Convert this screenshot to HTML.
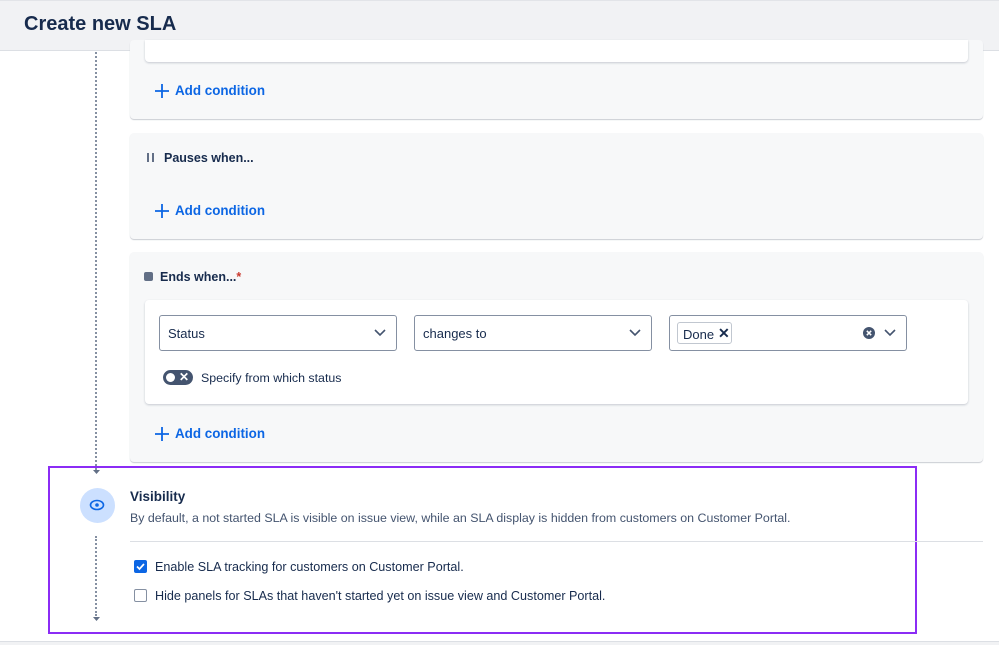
<!DOCTYPE html>
<html><head><style>
*{box-sizing:border-box;margin:0;padding:0}
body{width:999px;height:645px;overflow:hidden;background:#fff;font-family:"Liberation Sans",sans-serif;color:#172b4d;position:relative}
.abs{position:absolute}
.hdr{left:0;top:0;width:999px;height:51px;background:#f1f2f4;border-bottom:1px solid #dcdfe4;border-top:1px solid #e2e4e8}
.hdr h1{position:absolute;left:24px;top:12px;font-size:20px;font-weight:bold;color:#172b4d}
.panel{background:#f7f8f9;border-radius:4px;box-shadow:0 1px 1px #c9ccd2;left:130px;width:853px}
.card{background:#fff;border-radius:4px;box-shadow:0 1px 2px #c5c9d0;left:145px;width:823px}
.add{color:#0c66e4;font-size:13.4px;font-weight:bold}
.add svg{position:absolute;left:0;top:1px}
.add span{position:absolute;left:20px;top:0;white-space:nowrap}
.lbl{font-size:12.5px;font-weight:bold;color:#172b4d;white-space:nowrap}
.sel{border:1px solid #8590a2;border-radius:3px;height:36px;top:315px;width:238px;background:#fff;font-size:13px}
.sel .t{position:absolute;left:8px;top:10px}
.sel svg{position:absolute;right:10px;top:13px}
.dot{border-left:2px dotted #8590a2;width:0}
.txt{font-size:12.4px;color:#44546f;white-space:nowrap}
</style></head><body>
<div class="abs hdr"><h1>Create new SLA</h1></div>
<div class="abs dot" style="left:95px;top:52px;height:418px"></div>
<svg class="abs" style="left:92px;top:468px" width="9" height="8"><path d="M1 2 L4.5 6 L8 2" fill="#626f86"/></svg>

<div class="abs panel" style="top:40px;height:79px"></div>
<div class="abs card" style="top:40px;height:22px;border-top-left-radius:0;border-top-right-radius:0"></div>
<div class="abs add" style="left:155px;top:83px"><svg width="14" height="14"><path d="M7 0v14M0 7h14" stroke="#0c66e4" stroke-width="1.8"/></svg><span>Add condition</span></div>

<div class="abs panel" style="top:133px;height:106px"></div>
<div class="abs" style="left:147px;top:153px;width:2px;height:9px;background:#626f86"></div>
<div class="abs" style="left:152px;top:153px;width:2px;height:9px;background:#626f86"></div>
<div class="abs lbl" style="left:164px;top:151px">Pauses when...</div>
<div class="abs add" style="left:155px;top:203px"><svg width="14" height="14"><path d="M7 0v14M0 7h14" stroke="#0c66e4" stroke-width="1.8"/></svg><span>Add condition</span></div>

<div class="abs panel" style="top:252px;height:210px"></div>
<div class="abs" style="left:144px;top:272px;width:9px;height:9px;background:#626f86;border-radius:2px"></div>
<div class="abs lbl" style="left:160px;top:270px">Ends when...<span style="color:#c9372c">*</span></div>
<div class="abs card" style="top:300px;height:104px"></div>
<div class="abs sel" style="left:159px"><span class="t">Status</span><svg width="12" height="8"><path d="M1 1l5 5 5-5" fill="none" stroke="#44546f" stroke-width="1.6"/></svg></div>
<div class="abs sel" style="left:414px"><span class="t">changes to</span><svg width="12" height="8"><path d="M1 1l5 5 5-5" fill="none" stroke="#44546f" stroke-width="1.6"/></svg></div>
<div class="abs sel" style="left:669px">
 <div class="abs" style="left:7px;top:6px;width:55px;height:22px;border:1px solid #c1c7d0;border-radius:3px;background:#fff"><span style="position:absolute;left:5px;top:4px">Done</span><span style="position:absolute;left:40px;top:2px;font-weight:bold;font-size:14px">✕</span></div>
 <svg style="position:absolute;left:193px;top:11px" width="12" height="12"><circle cx="6" cy="6" r="6" fill="#44546f"/><path d="M3.8 3.8l4.4 4.4M8.2 3.8l-4.4 4.4" stroke="#fff" stroke-width="1.5"/></svg>
 <svg width="12" height="8"><path d="M1 1l5 5 5-5" fill="none" stroke="#44546f" stroke-width="1.6"/></svg></div>
<div class="abs" style="left:163px;top:370px;width:30px;height:15px;border-radius:8px;background:#44546f"><div style="position:absolute;left:3px;top:3px;width:9px;height:9px;border-radius:50%;background:#fff"></div><span style="position:absolute;left:16px;top:0px;color:#fff;font-size:12px;font-weight:bold">✕</span></div>
<div class="abs txt" style="left:201px;top:371px;color:#172b4d">Specify from which status</div>
<div class="abs add" style="left:155px;top:426px"><svg width="14" height="14"><path d="M7 0v14M0 7h14" stroke="#0c66e4" stroke-width="1.8"/></svg><span>Add condition</span></div>

<div class="abs" style="left:48px;top:466px;width:869px;height:168px;border:2px solid #8b2cf5"></div>
<div class="abs" style="left:80px;top:488px;width:35px;height:35px;border-radius:50%;background:#cce0ff"></div>
<svg class="abs" style="left:89px;top:499px" width="16" height="12"><ellipse cx="8" cy="6" rx="6.5" ry="4.5" fill="none" stroke="#0c66e4" stroke-width="1.6"/><circle cx="8" cy="6" r="1.8" fill="#0c66e4"/></svg>
<div class="abs dot" style="left:95px;top:536px;height:80px"></div>
<svg class="abs" style="left:92px;top:615px" width="9" height="8"><path d="M1 2 L4.5 6 L8 2" fill="#626f86"/></svg>
<div class="abs" style="left:130px;top:489px;font-size:13.5px;font-weight:bold;color:#172b4d">Visibility</div>
<div class="abs txt" style="left:130px;top:511px">By default, a not started SLA is visible on issue view, while an SLA display is hidden from customers on Customer Portal.</div>
<div class="abs" style="left:130px;top:541px;width:853px;height:1px;background:#dcdfe4"></div>
<div class="abs" style="left:134px;top:560px;width:13px;height:13px;border-radius:2px;background:#0c66e4"><svg style="position:absolute;left:2px;top:2px" width="9" height="9"><path d="M1 4.5l2.5 2.5 4.5-5" fill="none" stroke="#fff" stroke-width="1.7"/></svg></div>
<div class="abs txt" style="left:155px;top:560px;color:#172b4d;font-size:12.6px">Enable SLA tracking for customers on Customer Portal.</div>
<div class="abs" style="left:134px;top:589px;width:13px;height:13px;border-radius:2px;border:1.5px solid #8590a2;background:#fff"></div>
<div class="abs txt" style="left:155px;top:589px;color:#172b4d;font-size:12.6px">Hide panels for SLAs that haven't started yet on issue view and Customer Portal.</div>
<div class="abs" style="left:0;top:641px;width:999px;height:4px;background:#f1f2f4;border-top:1px solid #dcdfe4"></div>
</body></html>
